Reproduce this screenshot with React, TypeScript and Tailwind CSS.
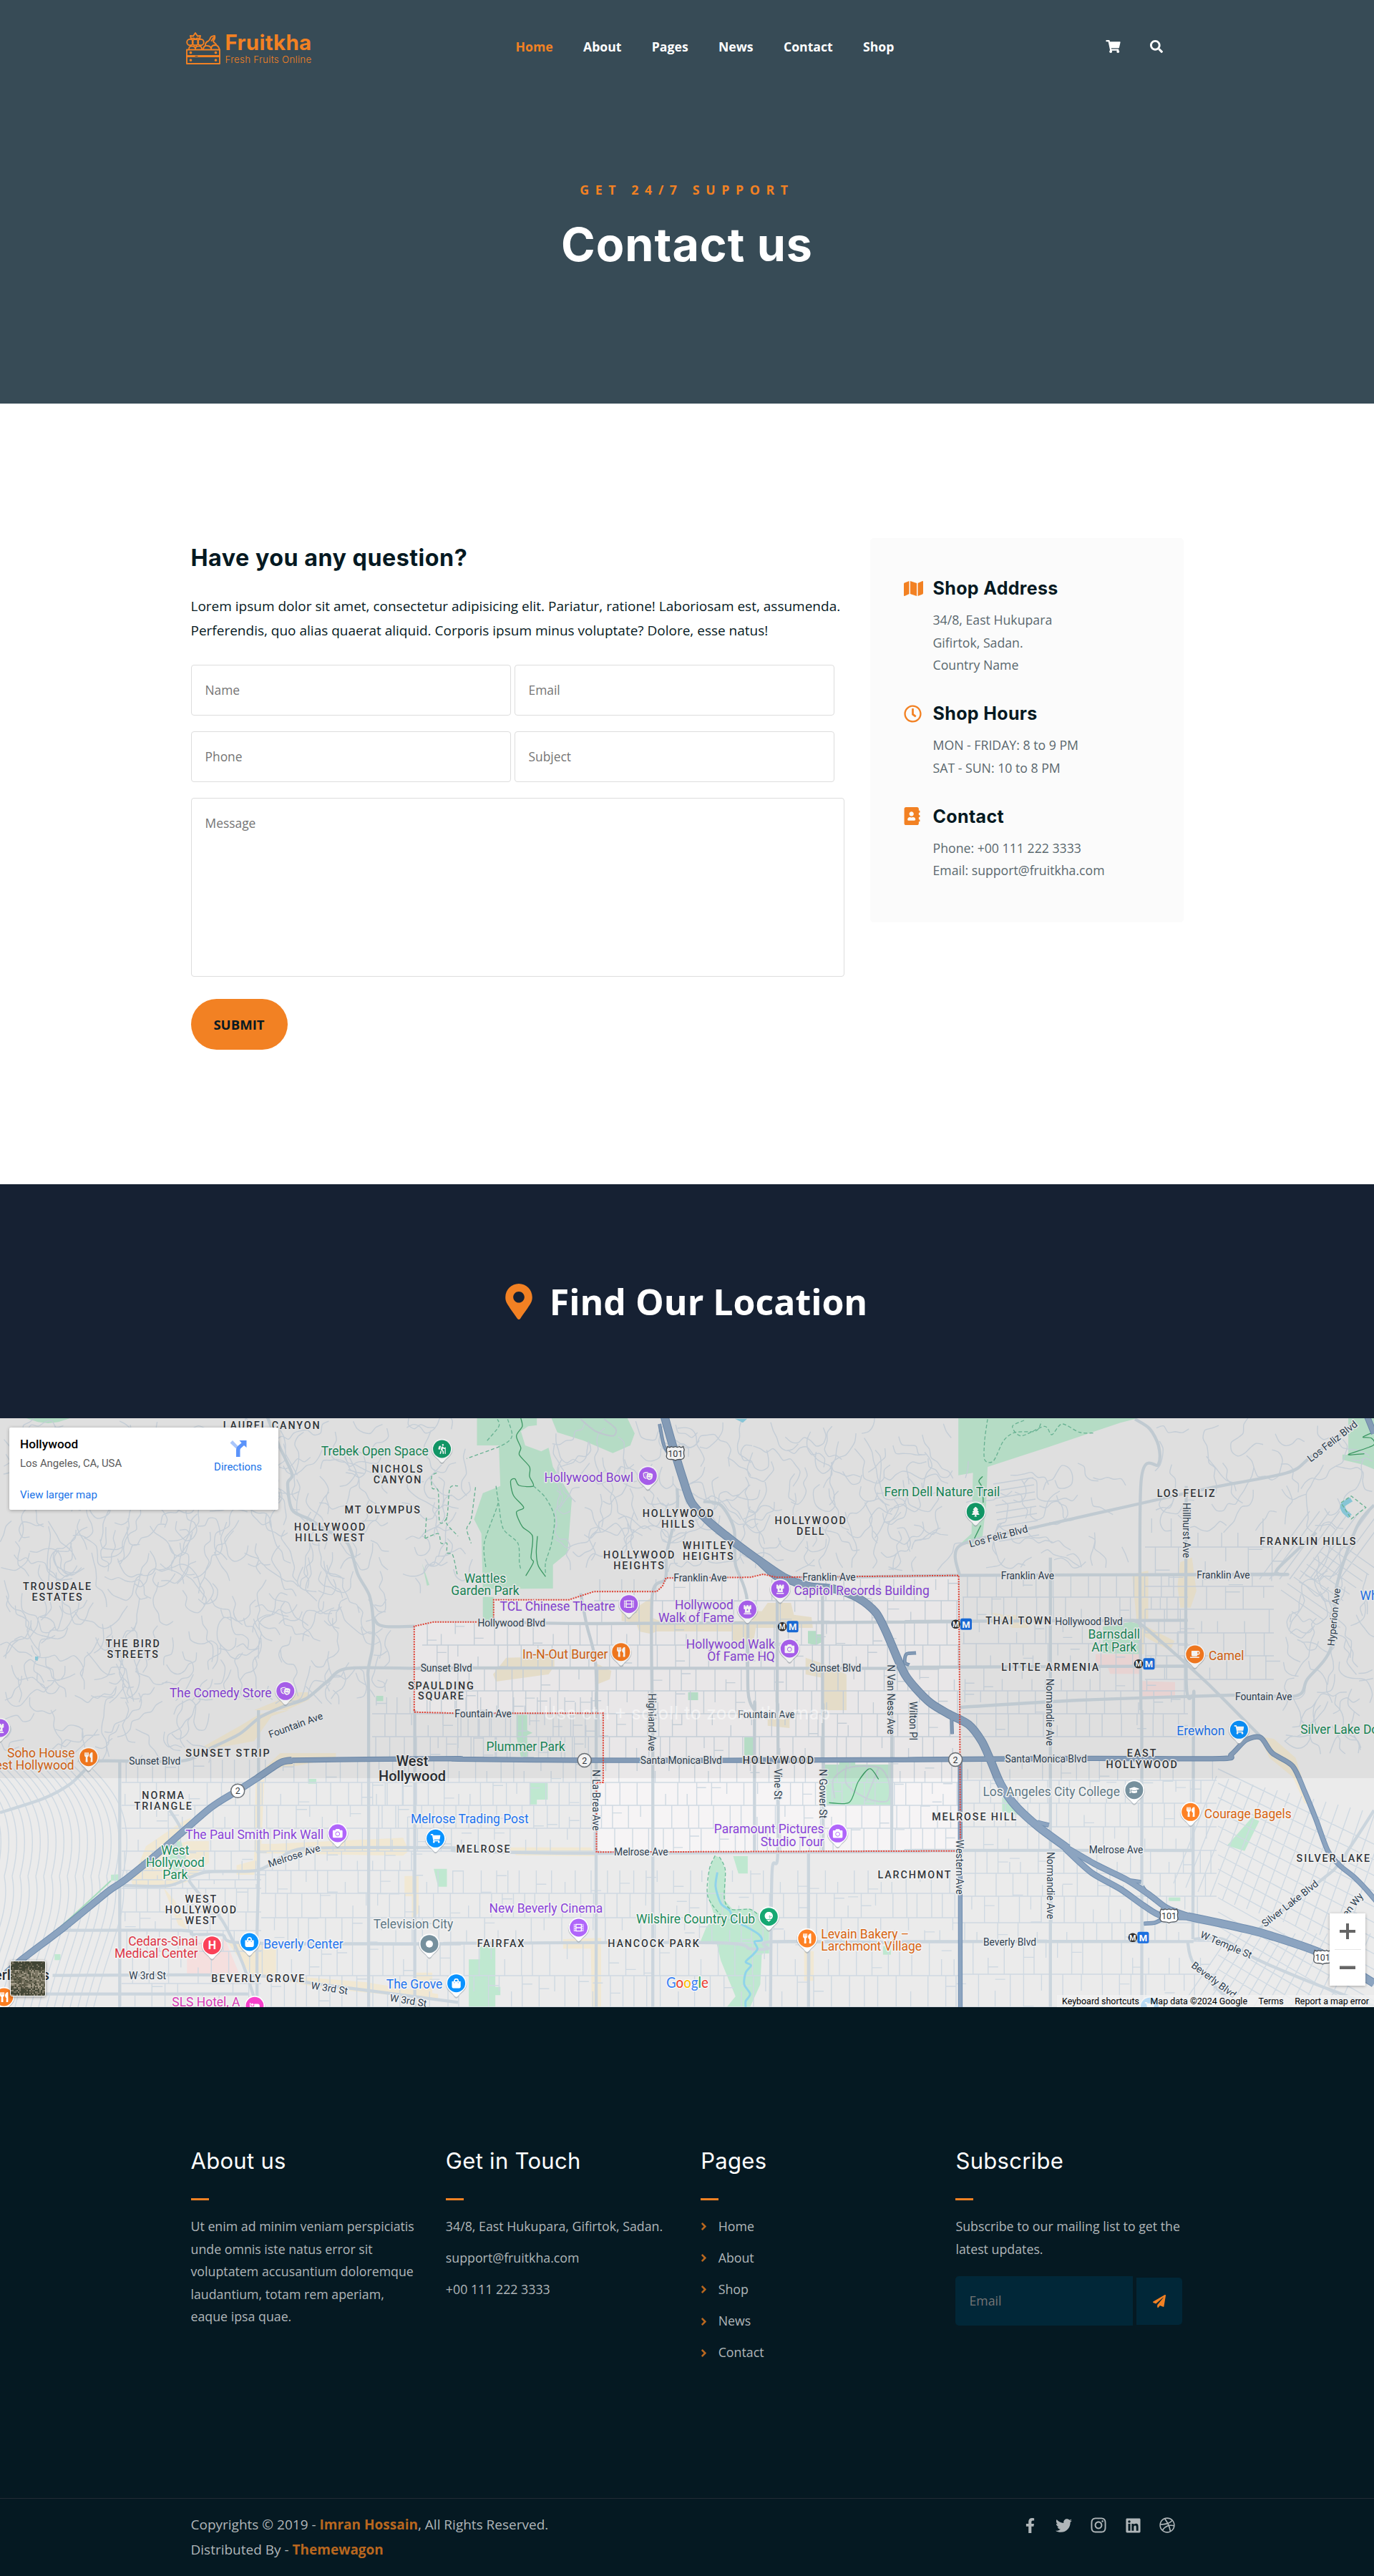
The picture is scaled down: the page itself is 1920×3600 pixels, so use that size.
import type { ComponentType, ReactNode } from "react";
import {
  FaAddressBook, FaAngleRight, FaBed, FaCamera, FaChessRook, FaCoffee, FaDribbble, FaFacebookF, FaFilm,
  FaGolfBall, FaGraduationCap, FaHiking, FaInstagram, FaLinkedin, FaMap, FaMapMarkerAlt, FaPaperPlane,
  FaRegClock, FaSearch, FaShoppingBag, FaShoppingCart, FaTheaterMasks, FaTree, FaTwitter, FaUtensils,
} from "react-icons/fa";

/* ------------------------------------------------------------------ */
/* Map geometry                                                        */
/* ------------------------------------------------------------------ */

type Pt = [number, number];

// The map is described in six sheets; each point is converted to map pixels.
const SHEETS: Record<string, Pt> = {
  A: [0, -12], B: [640, -12], C: [1280, -12],
  D: [0, 408], E: [640, 408], F: [1280, 408],
};

function at(sheet: string, x: number, y: number): Pt {
  const [ox, oy] = SHEETS[sheet];
  return [ox + x / 2.45, oy + y / 3];
}

function points(src: string): Pt[] {
  let sheet = "A";
  const out: Pt[] = [];
  for (const token of src.trim().split(/\s+/)) {
    if (SHEETS[token]) sheet = token;
    else {
      const [x, y] = token.split(",").map(Number);
      out.push(at(sheet, x, y));
    }
  }
  return out;
}

const f = (n: number) => n.toFixed(1);

function smooth(p: Pt[]): string {
  let d = `M${f(p[0][0])} ${f(p[0][1])}`;
  for (let i = 0; i < p.length - 1; i++) {
    const a = p[Math.max(0, i - 1)], b = p[i], c = p[i + 1], e = p[Math.min(p.length - 1, i + 2)];
    d += `C${f(b[0] + (c[0] - a[0]) / 7)} ${f(b[1] + (c[1] - a[1]) / 7)} ${f(c[0] - (e[0] - b[0]) / 7)} ${f(c[1] - (e[1] - b[1]) / 7)} ${f(c[0])} ${f(c[1])}`;
  }
  return d;
}

const poly = (src: string) => points(src).map((p) => p.map(f).join(",")).join(" ");

function random(seed: number) {
  let s = seed;
  return () => {
    s = (s * 1664525 + 1013904223) % 4294967296;
    return s / 4294967296;
  };
}

// Street blocks of the flat part of the city
function blocks(seed: number, x0: number, x1: number, ys: number[], min: number, max: number): string {
  const r = random(seed);
  let d = "";
  for (let row = 0; row < ys.length - 1; row++) {
    const top = ys[row], bottom = ys[row + 1];
    d += `M${x0} ${bottom}H${x1}`;
    for (let x = x0 + r() * max; x < x1; x += min + r() * (max - min)) {
      const cut = r();
      const a = cut > 0.85 ? top + (bottom - top) / 2 : top;
      const b = cut < 0.12 ? top + (bottom - top) / 2 : bottom;
      d += `M${f(x)} ${f(a)}V${f(b)}`;
      if (r() > 0.72) d += `M${f(x)} ${f(top + (bottom - top) * r())}h${f(min)}`;
    }
  }
  return d;
}

// Winding canyon roads
function canyons(seed: number, x0: number, y0: number, x1: number, y1: number, step: number): string {
  const r = random(seed);
  let d = "";
  for (let y = y0; y < y1; y += step) {
    for (let x = x0; x < x1; x += step) {
      let px = x + r() * step, py = y + r() * step;
      let dir = Math.PI / 2 + (r() - 0.5) * 2;
      const run: Pt[] = [[px, py]];
      const n = 4 + Math.floor(r() * 7);
      for (let i = 0; i < n; i++) {
        dir += (r() - 0.5) * 2.3;
        px += Math.cos(dir) * 10;
        py += Math.sin(dir) * 12;
        if (px < x0 || px > x1 || py > y1 + 10) break;
        run.push([px, py]);
      }
      if (run.length > 2) d += smooth(run);
    }
  }
  return d;
}

const HILLS = [
  canyons(11, 0, 0, 545, 390, 29),
  canyons(5, 770, 0, 1335, 205, 29),
  canyons(8, 1345, 60, 1580, 200, 34),
  canyons(23, 1790, 200, 1925, 460, 27),
  canyons(31, 560, 10, 665, 240, 34),
  canyons(47, 1610, 10, 1920, 150, 40),
  canyons(53, 0, 380, 300, 475, 30),
].join("");

const GRID = [
  blocks(3, 590, 1340, [286, 317, 349, 381, 413, 445, 477], 13, 30),
  blocks(4, 830, 1340, [225, 255, 286], 16, 34),
  blocks(9, 840, 1340, [477, 509, 541, 573, 606], 13, 27),
  blocks(12, 170, 580, [477, 509, 541, 573, 605, 632], 15, 26),
  blocks(15, 365, 1340, [632, 664, 698, 733, 779, 823], 14, 26),
  blocks(17, 1345, 1660, [220, 250, 283, 315, 348, 381, 413, 445], 13, 28),
  blocks(18, 1345, 1700, [475, 506, 538, 571, 604, 636, 668, 705, 731, 777, 823], 14, 30),
  blocks(19, 520, 840, [390, 413, 445, 477, 509, 541, 573, 605], 14, 24),
  blocks(20, 1600, 1780, [140, 180, 220, 235, 267, 300, 332, 365], 20, 38),
  blocks(21, 170, 365, [632, 645, 657, 690, 716, 745, 790, 823], 15, 30),
].join("");

const SLANTED = (() => {
  let d = "";
  for (let i = 0; i < 22; i++) {
    const x = -60 + i * 11;
    d += `M${x} 640C${x + 20} 560 ${x - 10} 520 ${x - 46} 486`;
    d += `M${x - 40} 823C${x - 20} 740 ${x + 10} 690 ${x} 640`;
  }
  for (let i = 0; i < 15; i++) {
    d += `M${1700 + i * 17} ${500 + i * 4}L${1640 + i * 17} ${650 + i * 6}`;
    d += `M${1702} ${490 + i * 20}L${1930} ${600 + i * 22}`;
  }
  for (let i = 0; i < 14; i++) d += `M${1720 + i * 15} 720L${1650 + i * 17} 823`;
  for (let i = 0; i < 9; i++) d += `M${1790 + i * 9} ${240 - i * 9}l60 42M${1760 + i * 14} 225l70 -95`;
  for (let i = 0; i < 9; i++) d += `M${1388 + i} ${92 + i * 10}l56 -9`;
  return d;
})();

const ARTERIALS = [
  "A 915,30 955,150 1000,270 985,310 1000,420 1060,460 1110,500 1190,560 1225,690 1265,780 1278,890 1275,1000 1260,1100 D 1262,0 1262,1245",
  "A 1278,870 1295,900 1330,910 1420,908",
  "D 720,160 820,100 890,30 A 970,1245 1050,1210 1120,1140 1190,1085 1440,1085 B 0,1083 1568,1085 C 0,1080 930,1075",
  "B 122,890 470,897 1568,890 C 0,888 930,883",
  "C 150,1248 560,1218 1080,1197 1300,1200 1340,1130 1420,1000 1440,740 1510,490 1568,400",
  "C 146,695 1190,690 1240,690 1240,665 1370,515",
  "B 1100,705 1300,703 1568,697 C 0,697 146,695",
  "C 150,700 150,570 400,495 770,393 1000,330 1270,265 1350,200 1500,60",
  "C 770,1260 770,310 830,230 830,150 800,80 750,40",
  "C 925,320 925,1140 950,1200 F 950,0 948,960",
  "C 460,620 460,1260 F 460,0 460,1245",
  "F 773,0 773,1245",
  "C 730,885 770,900 920,1060 1000,1150 1090,1260 F 1180,110",
  "D 0,430 150,370 240,310 300,240 330,213 620,213 720,160",
  "D 885,0 885,660 880,940 880,1245",
  "D 410,210 410,1245",
  "D 570,400 620,500 600,560 650,720 760,880 830,1060 880,1245",
  "D 420,735 580,735 700,680 885,670 1000,590 1120,577 1568,577 E 0,590 474,600 1568,592 F 0,588 945,588",
  "D 220,923 620,923 660,940 760,942 820,975 1280,980 1568,980 E 0,977 880,975 1000,1000 1060,1000 1080,970 1568,975 F 0,970 950,970",
  "D 180,1112 850,1112 1100,1150 1568,1225",
  "D 140,1190 850,1190",
  "B 420,770 440,900 470,1050 475,1260 E 473,0 473,1245",
  "B 750,330 750,420 715,600 710,710 665,780 665,1260 E 667,0 667,1245",
  "B 840,385 900,400 945,500 950,650 990,800 993,1180 1015,1260 E 1015,0 1015,590",
  "B 1093,700 1093,1260 E 1095,0 1095,600 1075,680 1070,1245",
  "B 1248,740 1248,1260 E 1250,0 1250,590",
  "E 1485,0 1485,590",
  "E 1200,600 1200,1245",
  "D 1420,0 1420,1245",
  "F 1150,940 1390,710 1450,640 1568,420",
  "F 950,960 1050,960 1160,1040 1350,1140 1568,1240",
  "F 930,970 950,1060 1060,1200 1120,1250",
];

const FREEWAYS: [string, number][] = [
  ["B 705,20 735,150 770,290 800,390 860,470 940,550 1040,640 1120,705 1200,740 1290,752 1370,790 1430,850 1465,930 1500,1030 1530,1110 1568,1170 C 50,1230 F 110,15 180,60 225,130 255,210 290,310 340,400 420,490 520,580", 11],
  ["F 520,580 620,650 720,710 800,775 860,830 930,862", 8],
  ["F 510,580 600,680 700,750 780,820 840,862 930,868", 8],
  ["F 930,865 1010,885 1110,912 1200,940 1370,1010 1480,1080 1568,1145", 11],
  ["F 720,712 770,720", 5],
  ["F 775,740 800,780 860,830", 5],
  ["F 780,895 820,890 850,870", 5],
  ["F 415,470 455,482", 6],
  ["F 124,100 122,30", 4],
  ["B 690,60 705,150 730,200", 4],
  ["B 945,545 1010,620 1080,700 1130,725", 5],
  ["B 1445,890 1490,1000", 7],
  ["B 1545,1070 1530,1060 1535,1025 1568,1020", 4],
  ["D 20,1105 70,1050 220,910 370,760 430,710 560,580 720,410 810,340 880,285 960,220 1000,210", 9],
  ["D 1000,210 1250,206 1568,203 E 0,205 430,210 1000,210 1568,207 F 0,207 600,202 1040,203 1080,185 1130,125 1180,115 1220,180 1290,235 1330,340 1370,460 1410,590 1450,650 1500,700 1540,750 1575,800", 6.5],
  ["F 151,210 152,1245", 5.5],
  ["C 1545,30 1568,100", 8],
];

const PARKS = [
  "A 90,36 130,52 165,57 200,52 240,36",
  "B 65,36 270,36 270,65 240,70 215,90 230,150 285,175 310,160 325,240 390,370 375,600 325,650 325,750 85,752 80,520 55,460 85,350 145,320 140,150 65,150",
  "B 320,36 580,36 605,100 590,150 530,182 430,130 340,95",
  "B 85,785 122,785 122,885 85,885",
  "B 1198,928 1225,928 1225,942 1245,942 1245,975 1225,988 1198,980",
  "B 788,1185 822,1185 822,1218 788,1218",
  "C 145,36 760,36 700,55 450,158 245,240 240,400 225,560 150,565 190,520 195,265 145,275",
  "C 1480,36 1568,36 1568,250 1530,230 1460,210 1460,188 1480,190",
  "C 640,910 735,890 770,900 770,1025 640,1020",
  "A 1445,645 1470,735 1462,738",
  "A 1288,1200 1312,1200 1312,1222 1288,1222",
  "E 880,610 900,620 915,670 915,800 940,835 1000,832 1050,870 1065,900 1065,1020 1040,1020 1035,1150 1000,1245 920,1245 950,1200 900,1050 885,975 830,970 850,910 880,870 855,780 860,670",
  "E 1255,228 1305,228 1305,216 1360,216 1360,228 1480,228 1480,398 1262,398",
  "E 942,612 992,612 992,685 960,685",
  "E 980,113 1012,113 1012,190 980,190",
  "E 245,305 307,305 307,375 270,375 270,395 247,395",
  "E 75,990 128,990 128,1160 145,1160 145,1195 128,1195 128,1245 37,1245 37,1045 75,1045",
  "E 200,20 237,20 237,85 255,95 237,105 237,195 215,195 200,110",
  "E 1455,990 1482,990 1482,1025 1455,1025",
  "D 590,550 620,550 640,640 600,680 580,620",
  "D 1485,665 1530,665 1530,740 1500,740",
  "D 1055,288 1083,288 1083,308 1055,308",
  "D 380,690 408,688 408,715 380,715",
  "D 187,1023 207,1023 207,1048 187,1048",
  "F 1150,450 1175,465 1125,590 1065,568",
  "F 295,365 330,375 355,440 295,425",
  "F 865,785 905,785 905,800 865,800",
];

const SHOPPING = [
  "B 560,830 610,830 660,790 660,870 700,890 1010,885 960,840 1040,845 1060,810 1140,810 1150,860 1210,870 1215,915 1020,915 1010,985 940,985 940,930 680,930 660,940 620,930 610,895 560,885",
  "B 165,1040 330,1035 330,1075 310,1110 130,1140 120,1110",
  "B 475,1065 525,1095 520,1130 480,1150",
  "B 1190,1040 1250,1065 1330,1110 1330,1260 1250,1260 1250,1125 1190,1110",
  "C 740,690 795,675 795,880 755,880 745,760",
  "C 905,640 945,620 960,760 940,830 905,830 895,740",
  "C 730,890 775,900 885,970 870,1010 780,950 780,1025 770,1025",
  "C 255,850 300,860 430,865 380,915 330,915",
  "D 700,150 830,60 890,15 990,0 930,25 870,130 710,165",
  "A 870,1260 1020,1185 1055,1185 1060,1215 980,1260",
  "D 960,180 1150,180 1150,200 1010,235 900,250",
  "D 450,720 500,570 620,470 655,450 610,560 640,550 715,548 715,640 640,720 570,745 455,735",
  "D 875,300 905,290 895,560 940,560 1380,535 1400,590 1380,610 890,600 870,690 810,690 810,650 870,630",
  "D 560,745 600,800 640,920 610,900",
  "D 780,975 945,990 945,1110 1250,1140 1500,1190 1500,1215 1100,1165 860,1110",
  "D 1425,1100 1480,1100 1480,1210 1425,1200",
  "D 1385,695 1433,695 1433,850 1410,880 1410,780 1385,780",
  "E 160,575 455,575 470,612 200,608",
  "E 360,960 490,955 490,1245 458,1245 455,1000 360,1000",
  "E 1185,1010 1218,1010 1218,1135 1185,1135",
  "E 1060,25 1135,25 1135,75 1060,65",
  "F 1175,110 1225,120 1300,200 1320,280 1350,400 1330,390 1290,280 1210,200",
];

const MEDICAL = [
  "D 640,1000 690,960 770,960 820,1108 640,1108",
  "C 615,1025 770,1025 770,1108 665,1108 655,1075 615,1070",
  "C 775,1138 887,1142 887,1200 775,1203",
];

const TRAILS_SOLID = [
  "B 215,36 220,70 200,110 215,160 210,190 245,240 245,280 258,320 210,318 195,290 180,300 190,360 225,410 200,430 220,490 255,530 250,620 258,640 232,697",
  "B 272,530 268,600 275,655 300,700",
  "C 228,280 215,300 228,330 230,390",
  "C 222,485 200,540",
  "C 1565,95 1530,115 1560,120 1565,150 1480,188 1535,185",
  "E 1270,388 1340,386 1370,300 1410,245 1440,290",
];

const TRAILS_DASHED = [
  "A 1495,265 1478,280 1480,330 1500,340 1505,470 1530,450 1540,330 1568,320",
  "A 1530,450 1530,480 1568,530",
  "A 1455,540 1460,450",
  "A 1455,540 1500,520 1510,560 1530,560 1530,600 1550,610 1565,690",
  "B 60,325 45,460 30,500 45,560",
  "B 130,320 140,400 155,500 205,560 210,640 215,670",
  "B 258,320 300,370 330,450 320,560 300,640 300,690",
  "B 95,660 90,560 130,420 140,380",
  "B 100,130 140,70 135,40",
  "B 170,40 185,110 150,150 30,205",
  "C 245,40 235,130 235,210 265,215 300,130 340,95 410,90 430,50",
  "C 370,45 330,70 360,110 440,70 465,105 500,60 560,95 610,98",
  "E 880,610 860,670 855,780 900,860 930,880",
  "E 895,615 915,670 912,790 935,835 1000,835 1030,860",
];

const STREAMS = [
  "E 888,680 882,740 900,810 930,840 945,880 990,910 1030,940 1040,965 1015,970 1025,1000 1010,1025 985,1055 1003,1070 985,1100 980,1150 1000,1190 985,1220 985,1245",
];

const BOUNDARY = poly(
  "A 1418,1260 1418,908 1485,890 1568,890 B 122,890 122,797 380,797 465,763 680,763 700,740 712,706 1000,703 1045,690 1090,703 1568,697 C 146,695 150,1260 F 152,590 E 474,595 474,303 497,303 497,13 0,13 D 1418,8",
);

/* ------------------------------------------------------------------ */
/* Map labels                                                          */
/* ------------------------------------------------------------------ */

type Anchor = "start" | "middle" | "end";

const GREEN = "#1a8a5a", PURPLE = "#8a44d8", ORANGE = "#d86512", BLUE = "#1f74ee", RED = "#dc3545", GREY = "#5f7885", PINK = "#d63ab5";

const POI_LABELS: [string, string, number, number, Anchor, string][] = [
  ["Trebek Open Space", "A", 1467, 192, "end", GREEN],
  ["The Comedy Store", "A", 930, 1207, "end", PURPLE],
  ["Hollywood Bowl", "B", 600, 303, "end", PURPLE],
  ["TCL Chinese Theatre", "B", 538, 843, "end", PURPLE],
  ["In-N-Out Burger", "B", 513, 1043, "end", ORANGE],
  ["Hollywood", "B", 943, 838, "end", PURPLE],
  ["Walk of Fame", "B", 945, 890, "end", PURPLE],
  ["Capitol Records Building", "B", 1150, 778, "start", PURPLE],
  ["Hollywood Walk", "B", 1085, 1001, "end", PURPLE],
  ["Of Fame HQ", "B", 1085, 1053, "end", PURPLE],
  ["Wattles", "B", 93, 725, "middle", GREEN],
  ["Garden Park", "B", 93, 778, "middle", GREEN],
  ["Fern Dell Nature Trail", "C", 287, 363, "end", GREEN],
  ["Barnsdall", "C", 678, 961, "middle", GREEN],
  ["Art Park", "C", 678, 1013, "middle", GREEN],
  ["Camel", "C", 1002, 1051, "start", ORANGE],
  ["Whole Foods", "C", 1520, 797, "start", BLUE],
  ["Soho House", "D", 256, 197, "end", ORANGE],
  ["West Hollywood", "D", 254, 249, "end", ORANGE],
  ["The Paul Smith Pink Wall", "D", 1108, 541, "end", PURPLE],
  ["West", "D", 600, 605, "middle", GREEN],
  ["Hollywood", "D", 600, 657, "middle", GREEN],
  ["Park", "D", 600, 709, "middle", GREEN],
  ["Melrose Trading Post", "D", 1406, 474, "start", BLUE],
  ["Cedars-Sinai", "D", 678, 986, "end", RED],
  ["Medical Center", "D", 678, 1038, "end", RED],
  ["Beverly Center", "D", 902, 998, "start", BLUE],
  ["Television City", "D", 1415, 916, "middle", GREY],
  ["The Grove", "D", 1515, 1168, "end", BLUE],
  ["SLS Hotel, A", "D", 822, 1243, "end", PINK],
  ["Plummer Park", "E", 97, 172, "start", GREEN],
  ["New Beverly Cinema", "E", 301, 848, "middle", PURPLE],
  ["Wilshire Country Club", "E", 1017, 893, "end", GREEN],
  ["Paramount Pictures", "E", 1253, 517, "end", PURPLE],
  ["Studio Tour", "E", 1253, 570, "end", PURPLE],
  ["Levain Bakery –", "E", 1243, 957, "start", ORANGE],
  ["Larchmont Village", "E", 1243, 1009, "start", ORANGE],
  ["Erewhon", "F", 1057, 106, "end", BLUE],
  ["Silver Lake Dog Park", "F", 1316, 100, "start", GREEN],
  ["Los Angeles City College", "F", 698, 359, "end", GREY],
  ["Courage Bagels", "F", 987, 452, "start", ORANGE],
];

const AREA_LABELS: [string, string, number, number][] = [
  ["LAUREL CANYON", "A", 930, 80], ["NICHOLS", "A", 1361, 264], ["CANYON", "A", 1361, 309],
  ["MT OLYMPUS", "A", 1310, 434], ["HOLLYWOOD", "A", 1130, 507], ["HILLS WEST", "A", 1130, 552],
  ["TROUSDALE", "A", 196, 755], ["ESTATES", "A", 196, 800], ["THE BIRD", "A", 455, 997], ["STREETS", "A", 455, 1042],
  ["SPAULDING", "A", 1510, 1172], ["SQUARE", "A", 1510, 1216],
  ["HOLLYWOOD", "B", 754, 449], ["HILLS", "B", 754, 495], ["HOLLYWOOD", "B", 620, 623], ["HEIGHTS", "B", 620, 668],
  ["WHITLEY", "B", 857, 584], ["HEIGHTS", "B", 857, 629], ["HOLLYWOOD", "B", 1207, 481], ["DELL", "B", 1207, 526],
  ["LOS FELIZ", "C", 925, 367], ["FRANKLIN HILLS", "C", 1342, 566], ["THAI TOWN", "C", 352, 899], ["LITTLE ARMENIA", "C", 460, 1095],
  ["SUNSET STRIP", "D", 780, 194], ["NORMA", "D", 559, 372], ["TRIANGLE", "D", 559, 418],
  ["WEST", "D", 688, 808], ["HOLLYWOOD", "D", 688, 852], ["WEST", "D", 688, 897], ["BEVERLY GROVE", "D", 884, 1139],
  ["MELROSE", "E", 87, 597], ["HOLLYWOOD", "E", 1097, 224], ["FAIRFAX", "E", 147, 992], ["HANCOCK PARK", "E", 670, 992],
  ["LARCHMONT", "E", 1563, 704], ["MELROSE HILL", "F", 200, 462], ["EAST", "F", 773, 196], ["HOLLYWOOD", "F", 773, 242],
  ["SILVER LAKE", "F", 1429, 636],
];

// text, sheet, centre x, centre y, rotation
const STREET_LABELS: [string, string, number, number, number][] = [
  ["Sunset Blvd", "A", 1528, 1083, 0], ["Franklin Ave", "B", 829, 706, 0], ["Franklin Ave", "B", 1270, 703, 0],
  ["Hollywood Blvd", "B", 183, 893, 0], ["Sunset Blvd", "B", 1292, 1084, 0], ["Highland Ave", "B", 665, 1311, 90],
  ["N Van Ness Ave", "B", 1482, 1215, 90], ["Wilton Pl", "B", 1559, 1305, 90],
  ["Los Feliz Blvd", "C", 282, 530, -15], ["Los Feliz Blvd", "C", 1425, 132, -38], ["Hillhurst Ave", "C", 925, 506, 90],
  ["Franklin Ave", "C", 382, 696, 0], ["Franklin Ave", "C", 1052, 694, 0], ["Hollywood Blvd", "C", 592, 887, 0],
  ["Fountain Ave", "C", 1190, 1202, 0], ["Hyperion Ave", "C", 1430, 870, -84], ["Normandie Ave", "C", 458, 1268, 90],
  ["Fountain Ave", "D", 1012, 62, -20], ["Sunset Blvd", "D", 530, 214, 0], ["Melrose Ave", "D", 1007, 610, -18],
  ["W 3rd St", "D", 505, 1112, 0], ["W 3rd St", "D", 1128, 1165, 9], ["W 3rd St", "D", 1398, 1217, 9],
  ["Fountain Ave", "E", 86, 16, 0], ["Fountain Ave", "E", 1056, 19, 0], ["Santa Monica Blvd", "E", 764, 210, 0],
  ["Melrose Ave", "E", 627, 593, 0], ["Vine St", "E", 1095, 310, 90], ["N Gower St", "E", 1250, 350, 90],
  ["N La Brea Ave", "E", 473, 377, 90], ["Santa Monica Blvd", "F", 445, 205, 0], ["Melrose Ave", "F", 685, 586, 0],
  ["Western Ave", "F", 150, 658, 90], ["Normandie Ave", "F", 460, 735, 90], ["Beverly Blvd", "F", 321, 973, 0],
  ["Silver Lake Blvd", "F", 1280, 810, -38], ["W Temple St", "F", 1062, 983, 23], ["Beverly Blvd", "F", 1020, 1130, 37],
  ["Glen Wy", "F", 1485, 830, -52],
];

type Icon = ComponentType<{ size?: number | string; x?: number; y?: number; color?: string; className?: string }>;

const PINS: [string, number, number, string, Icon | string][] = [
  ["A", 1513, 165, "#129e6b", FaHiking], ["A", 977, 1180, "#ae62f5", FaTheaterMasks],
  ["B", 650, 278, "#ae62f5", FaTheaterMasks], ["B", 585, 815, "#ae62f5", FaFilm], ["B", 558, 1016, "#fb7d20", FaUtensils],
  ["B", 991, 838, "#ae62f5", FaChessRook], ["B", 1103, 752, "#ae62f5", FaChessRook], ["B", 1135, 1002, "#ae62f5", FaCamera],
  ["C", 204, 428, "#129e6b", FaTree], ["C", 955, 1026, "#fb7d20", FaCoffee],
  ["D", 0, 75, "#ae62f5", FaChessRook], ["D", 303, 197, "#fb7d20", FaUtensils], ["D", 1156, 516, "#b066fa", FaCamera],
  ["D", 1491, 538, "#0a93ff", FaShoppingCart], ["D", 726, 986, "#fb4158", "H"], ["D", 854, 972, "#0a93ff", FaShoppingBag],
  ["D", 1470, 980, "#76909d", "●"], ["D", 1562, 1145, "#0a93ff", FaShoppingBag], ["D", 872, 1240, "#f83fcb", FaBed],
  ["D", 14, 1203, "#fb7d20", FaUtensils], ["E", 413, 912, "#b066fa", FaFilm], ["E", 1064, 866, "#16a873", FaGolfBall],
  ["E", 1300, 517, "#b066fa", FaCamera], ["E", 1195, 957, "#fe8225", FaUtensils], ["F", 1106, 82, "#0a93ff", FaShoppingCart],
  ["F", 747, 335, "#76909d", FaGraduationCap], ["F", 940, 427, "#fe8225", FaUtensils], ["F", 800, 1243, "#0a93ff", FaShoppingCart],
];

const METROS: [string, number, number][] = [["B", 1110, 910], ["C", 136, 899], ["C", 762, 1066], ["F", 742, 953]];
const SHIELDS: [string, string, number, number][] = [
  ["101", "B", 744, 183], ["101", "F", 866, 862], ["101", "F", 1392, 1035],
  ["2", "D", 814, 338], ["2", "E", 433, 210], ["2", "F", 135, 207],
];

function Pin({ x, y, color, icon }: { x: number; y: number; color: string; icon: Icon | string }) {
  const Glyph = icon as Icon;
  return (
    <g transform={`translate(${f(x)} ${f(y)})`}>
      <path d="M0 20C-2 20-3 17.500-5 15C-8.500 11.500-14.800 7.500-14.800 0A14.800 14.800 0 0 1 14.800 0C14.800 7.500 8.500 11.500 5 15C3 17.500 2 20 0 20Z" fill="#9aa4ab" opacity=".6" transform="translate(0 1)" />
      <path d="M0 19C-2 19-3 17-5 14.600C-8.500 11-14.300 7-14.300 0A14.300 14.300 0 0 1 14.300 0C14.300 7 8.500 11 5 14.600C3 17 2 19 0 19Z" fill="#fff" />
      <circle r="12.500" fill={color} />
      {icon === "●" ? (
        <circle r="5" fill="#fff" />
      ) : typeof icon === "string" ? (
        <text y="5.500" textAnchor="middle" fontSize="16" fontWeight="700" fill="#fff">{icon}</text>
      ) : (
        <Glyph x={-7} y={-7} size={14} color="#fff" />
      )}
    </g>
  );
}

function Shield({ x, y, text }: { x: number; y: number; text: string }) {
  return (
    <g transform={`translate(${f(x)} ${f(y)})`}>
      {text === "2" ? (
        <circle r="9.500" fill="#fff" stroke="#6b7177" strokeWidth="1.500" />
      ) : (
        <path d="M-11-9.500Q-8-7-5.500-9.500Q-3-7.500 0-9.500Q3-7.500 5.500-9.500Q8-7 11-9.500L12.500-5Q11-1 12.500 4Q12 9 6 8.500Q2 8.500 0 10Q-2 8.500-6 8.500Q-12 9-12.500 4Q-11-1-12.500-5Z" fill="#fff" stroke="#4d5359" strokeWidth="1.300" />
      )}
      <text y="4.500" textAnchor="middle" fontSize="12.500" fill="#33383d">{text}</text>
    </g>
  );
}

function CityMap() {
  return (
    <svg viewBox="0 0 1920 823" className="block h-[823px] w-full font-[Roboto]">
      <rect width="1920" height="823" fill="#ebebeb" />
      <polygon points={BOUNDARY} fill="#f6f4f5" />
      {SHOPPING.map((s) => <polygon key={s} points={poly(s)} fill="#f1e8d3" />)}
      {MEDICAL.map((s) => <polygon key={s} points={poly(s)} fill="#f5dfde" />)}
      {PARKS.map((s) => <polygon key={s} points={poly(s)} fill="#bfe8d0" />)}
      <g fill="none" stroke="#cfd9e2" strokeWidth="1.400">
        <path d={HILLS} />
        <path d={GRID} />
        <path d={SLANTED} />
      </g>
      <g fill="none" stroke="#c9d2da" strokeWidth="2">
        <path d={smooth(points("B 420,40 470,90 530,110 540,80 500,40"))} />
        <path d={smooth(points("E 1290,370 1285,290 1340,240 1440,240 1475,300 1470,380 1400,370 1330,310 1330,230"))} />
        <path d={smooth(points("E 1395,380 1440,240"))} />
      </g>
      <polygon points={poly("B 948,38 990,38 975,55")} fill="#8fd0e2" />
      <path d={smooth(points("C 1490,376 1462,400 1466,425 1486,447"))} fill="none" stroke="#8fd0e2" strokeWidth="7" />
      <polygon points={poly("A 120,1035 131,1035 129,1053 120,1050")} fill="#8fd0e2" />
      <g fill="none" stroke="#cbd5dd" strokeWidth="4.300" strokeLinejoin="round">
        {ARTERIALS.map((s) => <path key={s} d={smooth(points(s))} />)}
      </g>
      <g fill="none" stroke="#8fd4ea" strokeWidth="3">
        {STREAMS.map((s) => <path key={s} d={smooth(points(s))} />)}
      </g>
      <g fill="none" stroke="#3f9f68" strokeWidth="1.300">
        {TRAILS_SOLID.map((s) => <path key={s} d={smooth(points(s))} />)}
      </g>
      <g fill="none" stroke="#6dbb9a" strokeWidth="1.300" strokeDasharray="5 3">
        {TRAILS_DASHED.map((s) => <path key={s} d={smooth(points(s))} />)}
        <polygon points={poly("C 1455,390 1490,362 1540,410 1490,458")} />
      </g>
      <path d={smooth(points("D 20,1090 210,905 380,715"))} stroke="#a5dcbc" strokeWidth="2" fill="none" />
      <g fill="none" strokeLinejoin="round">
        {FREEWAYS.map(([s, w]) => <path key={s} d={smooth(points(s))} stroke="#708eb0" strokeWidth={w + 0.8} />)}
        {FREEWAYS.map(([s, w]) => <path key={s} d={smooth(points(s))} stroke="#8ca4c0" strokeWidth={w - 1.2} />)}
      </g>
      <polygon points={BOUNDARY} fill="none" stroke="#ea4335" strokeWidth="2" strokeDasharray="2 1.500" />

      <g fill="#2f4050" fontSize="13.800" textAnchor="middle" stroke="#eef0f2" strokeWidth="3" strokeLinejoin="round" paintOrder="stroke">
        {STREET_LABELS.map(([t, s, x, y, r]) => {
          const [px, py] = at(s, x, y);
          return <text key={t + s + x} transform={`translate(${f(px)} ${f(py)}) rotate(${r})`} y="5">{t}</text>;
        })}
      </g>
      <g fill="#33373b" fontSize="14.300" fontWeight="500" letterSpacing="1.900" textAnchor="middle" stroke="#f2f2f2" strokeWidth="3" strokeLinejoin="round" paintOrder="stroke">
        {AREA_LABELS.map(([t, s, x, y]) => {
          const [px, py] = at(s, x, y);
          return <text key={t + s + y + x} x={px + 0.5} y={py}>{t}</text>;
        })}
      </g>
      <g fill="#2b2f33" fontSize="19.900" fontWeight="500" textAnchor="middle" stroke="#f2f2f2" strokeWidth="3" strokeLinejoin="round" paintOrder="stroke">
        <text x="576" y="486">West</text>
        <text x="576" y="506.500">Hollywood</text>
        <text x="69" y="785" textAnchor="end">Beverly Hills</text>
      </g>
      {SHIELDS.map(([t, s, x, y]) => {
        const [px, py] = at(s, x, y);
        return <Shield key={t + s + x} x={px} y={py} text={t} />;
      })}
      <g fontSize="17.450" stroke="#f4f4f4" strokeWidth="3" strokeLinejoin="round" paintOrder="stroke">
        {POI_LABELS.map(([t, s, x, y, a, c]) => {
          const [px, py] = at(s, x, y);
          return <text key={t + s + x + y} x={px} y={py} textAnchor={a} fill={c}>{t}</text>;
        })}
      </g>
      {METROS.map(([s, x, y]) => {
        const [px, py] = at(s, x, y);
        return (
          <g key={s + x} transform={`translate(${f(px)} ${f(py)})`} fontWeight="700" textAnchor="middle" fill="#fff">
            <circle r="6.300" fill="#2b2b2b" />
            <text y="4" fontSize="10.500">M</text>
            <rect x="6.500" y="-8" width="16" height="16" rx="2.500" fill="#1a6fe0" />
            <text x="14.500" y="4.800" fontSize="13">M</text>
          </g>
        );
      })}
      {PINS.map(([s, x, y, c, icon]) => {
        const [px, py] = at(s, x, y);
        return <Pin key={s + x} x={px} y={py} color={c} icon={icon} />;
      })}

      <rect width="1920" height="503" fill="#000" opacity=".052" />
      <text x="960" y="421" textAnchor="middle" fontSize="25.800" textLength="400" fill="#fff" opacity=".5">Use ctrl + scroll to zoom the map</text>
      <text x="931" y="796" fontSize="21.500" textLength="59" lengthAdjust="spacingAndGlyphs" fontWeight="500" stroke="#fff" strokeWidth="2" paintOrder="stroke" className="font-[Lato]">
        <tspan fill="#4285f4">G</tspan><tspan fill="#ea4335">o</tspan><tspan fill="#fbbc05">o</tspan><tspan fill="#4285f4">g</tspan><tspan fill="#34a853">l</tspan><tspan fill="#ea4335">e</tspan>
      </text>
    </svg>
  );
}

function SatelliteThumb() {
  const r = random(77);
  const tones = ["#5d5a48", "#7b7664", "#918b78", "#4a4c3b", "#6c6a56", "#a29b88"];
  return (
    <svg viewBox="0 0 24 24" className="size-full" preserveAspectRatio="none">
      <rect width="24" height="24" fill="#6b6855" />
      {Array.from({ length: 576 }, (_, i) => {
        const y = Math.floor(i / 24);
        const n = Math.floor(r() * 6);
        return <rect key={i} x={i % 24} y={y} width="1.050" height="1.050" fill={(y < 6 && n > 1) || (y > 18 && n > 3) ? "#414535" : tones[n]} />;
      })}
    </svg>
  );
}

function MapSection() {
  return (
    <section className="relative h-[823px] overflow-hidden font-[Roboto]">
      <CityMap />
      <div className="absolute left-[13px] top-[13px] flex h-[115px] w-[376px] justify-between rounded-[2px] bg-white pl-[15px] pr-[23px] shadow-[0_1px_5px_rgba(0,0,0,0.3)]">
        <div>
          <div className="mt-[13px] text-[17.2px] font-medium leading-[20px] text-black">Hollywood</div>
          <div className="mt-[8px] text-[14.9px] leading-[18px] text-[#5b5b5b]">Los Angeles, CA, USA</div>
          <div className="mt-[26px] text-[15px] leading-[18px] text-[#1a73e8]">View larger map</div>
        </div>
        <div className="flex flex-col items-center">
          <svg viewBox="0 0 24 24" className="mt-[17px] size-6">
            <path d="M0.500 4.500L4 1L11 8.500L9.500 13Z" fill="#a9c6fb" />
            <path d="M9 24V14Q9 11 11 9L16.500 4.500L13.500 1H23.500V11L20 8L15 12.500Q14.500 13 14.500 15V24Z" fill="#5b93fa" />
          </svg>
          <div className="mt-[5px] text-[14.9px] leading-[18px] text-[#1a73e8]">Directions</div>
        </div>
      </div>
      <div className="absolute left-[14px] top-[758px] size-[50px] overflow-hidden rounded-[3px] border-[1.500px] border-white shadow-[0_1px_4px_rgba(0,0,0,0.4)]">
        <SatelliteThumb />
      </div>
      <div className="absolute left-[1858px] top-[692px] flex h-[101px] w-[50px] flex-col items-center bg-white shadow-[0_1px_4px_rgba(0,0,0,0.3)]">
        <svg viewBox="0 0 22 22" className="mt-[14px] size-[22px]"><path d="M9 0h4v9h9v4h-9v9h-4v-9h-9v-4h9Z" fill="#666" /></svg>
        <div className="mt-[14px] h-px w-[37px] bg-[#e6e6e6]" />
        <svg viewBox="0 0 22 22" className="mt-[14px] size-[22px]"><path d="M0 8.500h22v4.500h-22Z" fill="#666" /></svg>
      </div>
      <div className="absolute bottom-0 right-0 flex h-[17px] w-[443px] justify-between bg-[#f2f2f2]/75 pl-[7px] pr-[7px] text-[12.45px] leading-[17px] text-black">
        <span>Keyboard shortcuts</span><span>Map data ©2024 Google</span><span>Terms</span><span>Report a map error</span>
      </div>
    </section>
  );
}

/* ------------------------------------------------------------------ */
/* Header                                                              */
/* ------------------------------------------------------------------ */

function Logo() {
  return (
    <div className="ml-[-7px] mt-[6px] flex h-[46px] w-[176px] text-[#f28123]">
      <svg viewBox="0 0 48 45" className="h-[45px] w-12" fill="none" stroke="currentColor" strokeWidth="1.900" strokeLinejoin="round" strokeLinecap="round">
        <rect x="1" y="24.500" width="46" height="19.500" />
        <path d="M1 33.500H47" strokeWidth="3" />
        <path d="M13 33.500H16" stroke="#374b56" strokeWidth="1" />
        <circle cx="6.500" cy="28.500" r=".9" fill="currentColor" /><circle cx="41.500" cy="28.500" r=".9" fill="currentColor" />
        <circle cx="6.500" cy="39" r=".9" fill="currentColor" /><circle cx="41.500" cy="39" r=".9" fill="currentColor" />
        <circle cx="5.500" cy="14" r="4.300" /><circle cx="13" cy="14" r="4.300" /><circle cx="20.500" cy="14" r="4.300" />
        <path d="M4 23.500Q4 19 9 19.500Q13 20 13 23.500Q13 19.500 17 19.500Q22 19 22 23.500" />
        <path d="M7 9L6 5L10 5.500L13 1L16 5.500L20 5L19 9L15 8.500L13 10L11 8.500Z" />
        <path d="M24 23.500Q25 18 30 19Q35 19.500 35 23.500Q35 18.500 40 18Q45 18 46.500 23.500" />
        <path d="M27 18Q27 14 31 12.500Q33 11.500 34 8Q35 5.500 40 5Q41 9 38.500 11.500Q37 13 40.500 15.500Q42 16.500 42.500 18M35.500 12L38.500 7.500" />
      </svg>
      <div className="ml-[7px] font-[Inter]">
        <div className="mt-px text-[29.500px] font-bold leading-[27px] tracking-[0.300px]">Fruitkha</div>
        <div className="mt-[4px] whitespace-nowrap text-[13.3px] font-light leading-[13px] tracking-[0.3px]">Fresh Fruits Online</div>
      </div>
    </div>
  );
}

const NAV = ["Home", "About", "Pages", "News", "Contact", "Shop"];

function Hero() {
  return (
    <section className="h-[564px] bg-[#374b56] text-white">
      <header className="mx-auto flex h-[85px] w-[1387px] items-center pt-[45px]">
        <Logo />
        <nav className="ml-[285px] flex gap-[42.300px] text-[17.650px] font-bold leading-[40px]">
          {NAV.map((n, i) => <a key={n} className={i === 0 ? "text-[#f28123]" : ""}>{n}</a>)}
        </nav>
        <div className="ml-auto mr-[29px] flex gap-[41px]">
          <FaShoppingCart className="h-[18px] w-[21px]" />
          <FaSearch className="size-[18px]" />
        </div>
      </header>
      <div className="pt-[165px] text-center">
        <p className="text-[17.800px] font-bold uppercase leading-[30px] tracking-[8.600px] text-[#f28123]">Get 24/7 Support</p>
        <h1 className="mt-[22px] font-[Inter] text-[64.500px] font-bold leading-[80px] tracking-[1px]">Contact us</h1>
      </div>
    </section>
  );
}

/* ------------------------------------------------------------------ */
/* Contact form and shop details                                       */
/* ------------------------------------------------------------------ */

const fieldClass = "rounded-[4px] border border-[#ddd] bg-white px-[19px] pb-[2px] text-[17.400px] text-[#051922] outline-none placeholder:text-[#757575]";

function Detail({ icon, title, lines }: { icon: ReactNode; title: string; lines: string[] }) {
  return (
    <div className="mb-[33.500px] flex">
      <div className="flex h-9 w-[41px] items-center text-[#f28123]">{icon}</div>
      <div>
        <h4 className="font-[Inter] text-[25px] font-bold leading-[36px] tracking-[0.350px] text-[#051922]">{title}</h4>
        <div className="mt-[11px] text-[17.700px] leading-[31.500px] text-[#5a686e]">
          {lines.map((l) => <div key={l}>{l}</div>)}
        </div>
      </div>
    </div>
  );
}

function Contact() {
  return (
    <section className="h-[1091px] bg-white">
      <div className="mx-auto flex w-[1387px] justify-between pt-[188px]">
        <div className="w-[913px] pt-[8px]">
          <h2 className="font-[Inter] text-[32.300px] font-bold leading-[40px] tracking-[0.480px] text-[#051922]">Have you any question?</h2>
          <p className="mt-[30px] whitespace-nowrap text-[19px] leading-[34px] text-[#051922]">
            Lorem ipsum dolor sit amet, consectetur adipisicing elit. Pariatur, ratione! Laboriosam est, assumenda.<br />
            Perferendis, quo alias quaerat aliquid. Corporis ipsum minus voluptate? Dolore, esse natus!
          </p>
          <form className="mt-[31px] flex flex-col">
            <div className="grid w-[899px] grid-cols-2 gap-x-[5px] gap-y-[22px]">
              {["Name", "Email", "Phone", "Subject"].map((p) => (
                <input key={p} placeholder={p} className={`${fieldClass} h-[71px] w-full`} />
              ))}
            </div>
            <textarea placeholder="Message" className={`${fieldClass} mt-[22px] block h-[250px] w-full resize-none pt-[19px] leading-[30px]`} />
            <button type="button" className="mt-[31px] h-[71px] w-[135px] rounded-full bg-[#f28123] text-[18.600px] font-bold text-[#051922]">SUBMIT</button>
          </form>
        </div>
        <aside className="h-[537px] w-[438px] rounded-[5px] bg-[#fbfbfb] pl-[47px] pt-[52px]">
          <Detail icon={<FaMap size={27} />} title="Shop Address" lines={["34/8, East Hukupara", "Gifirtok, Sadan.", "Country Name"]} />
          <Detail icon={<FaRegClock size={25} />} title="Shop Hours" lines={["MON - FRIDAY: 8 to 9 PM", "SAT - SUN: 10 to 8 PM"]} />
          <Detail icon={<FaAddressBook size={25} className="ml-[-1px]" />} title="Contact" lines={["Phone: +00 111 222 3333", "Email: support@fruitkha.com"]} />
        </aside>
      </div>
    </section>
  );
}

function FindUs() {
  return (
    <section className="flex h-[327px] items-center justify-center gap-[18px] bg-[#162133] pr-[8px]">
      <FaMapMarkerAlt size={50} color="#f28123" />
      <h2 className="text-[50px] font-bold leading-[60px] text-white">Find Our Location</h2>
    </section>
  );
}

/* ------------------------------------------------------------------ */
/* Footer                                                              */
/* ------------------------------------------------------------------ */

function Column({ title, children }: { title: string; children: ReactNode }) {
  return (
    <div>
      <h3 className="font-[Inter] text-[31px] font-normal leading-[40px] tracking-[0.300px] text-white">{title}</h3>
      <div className="mb-[21px] mt-[32px] h-[3px] w-[25px] bg-[#f28123]" />
      {children}
    </div>
  );
}

function Footer() {
  return (
    <footer className="h-[795px] bg-[#051922] text-[17.780px] leading-[31.600px] text-[#b0b6b9]">
      <div className="mx-auto grid h-[686px] w-[1387px] grid-cols-[318px_318px_318px_318px] justify-between whitespace-nowrap pt-[195px]">
        <Column title="About us">
          Ut enim ad minim veniam perspiciatis<br />unde omnis iste natus error sit<br />voluptatem accusantium doloremque<br />laudantium, totam rem aperiam,<br />eaque ipsa quae.
        </Column>
        <Column title="Get in Touch">
          <ul className="flex flex-col gap-[12.500px]">
            {["34/8, East Hukupara, Gifirtok, Sadan.", "support@fruitkha.com", "+00 111 222 3333"].map((t) => <li key={t}>{t}</li>)}
          </ul>
        </Column>
        <Column title="Pages">
          <ul className="flex flex-col gap-[12.500px]">
            {["Home", "About", "Shop", "News", "Contact"].map((t) => (
              <li key={t} className="flex items-center"><FaAngleRight size={17} className="-ml-1 mr-[11.500px] text-[#b9671f]" />{t}</li>
            ))}
          </ul>
        </Column>
        <Column title="Subscribe">
          Subscribe to our mailing list to get the<br />latest updates.
          <form className="mt-[22px] flex items-center gap-[5px] leading-normal">
            <input placeholder="Email" className="h-[69px] w-[248px] rounded-l-[5px] bg-[#012738] px-[19px] pb-[2px] text-[17.700px] outline-none placeholder:text-[#757575]" />
            <button type="button" className="flex h-[66px] w-[64px] items-center justify-center rounded-r-[5px] bg-[#012738] text-[#f28123]"><FaPaperPlane size={18} /></button>
          </form>
        </Column>
      </div>
      <div className="border-t border-[#232a35]">
        <div className="mx-auto flex w-[1387px] justify-between pt-[19px] text-[19px] leading-[34.500px]">
          <div>
            <p>Copyrights © 2019 - <b className="text-[#b9671f]">Imran Hossain</b>, All Rights Reserved.</p>
            <p>Distributed By - <b className="text-[#b9671f]">Themewagon</b></p>
          </div>
          <div className="mr-[12px] flex h-[36px] items-center gap-[25px]">
            <FaFacebookF size={21} /><FaTwitter size={23} /><FaInstagram size={24} /><FaLinkedin size={23} /><FaDribbble size={22} />
          </div>
        </div>
      </div>
    </footer>
  );
}

export default function App() {
  return (
    <div className="w-full overflow-hidden font-['Open_Sans',sans-serif]">
      <Hero />
      <Contact />
      <FindUs />
      <MapSection />
      <Footer />
    </div>
  );
}
